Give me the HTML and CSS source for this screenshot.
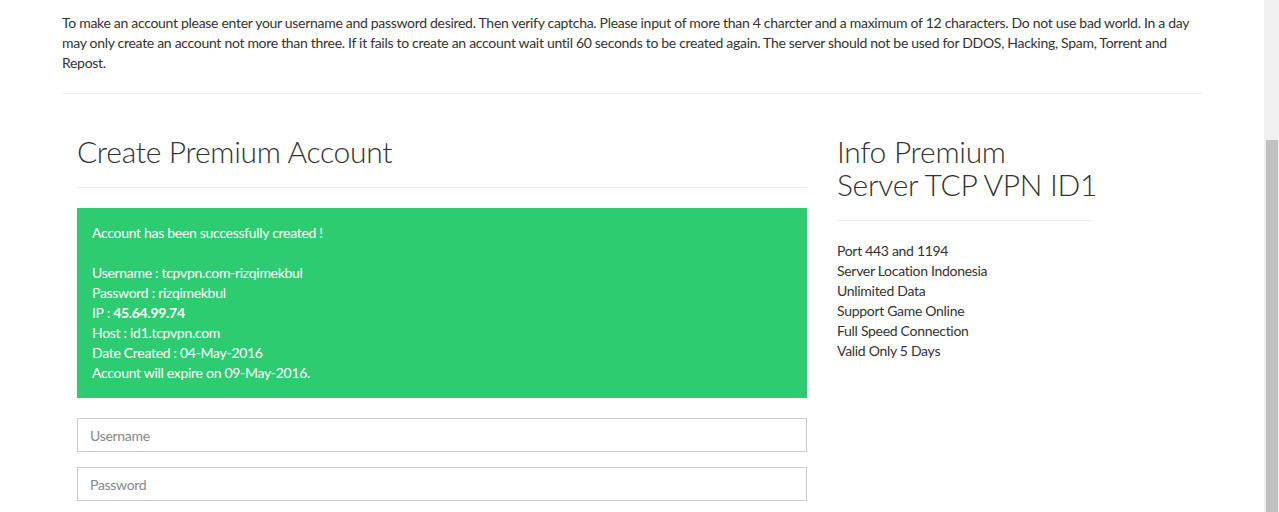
FILE: index.html
```html
<!DOCTYPE html>
<html lang="en">
<head>
    <meta charset="UTF-8">
    <meta name="viewport" content="width=device-width, initial-scale=1.0">
    <title>Create Premium Account</title>
    <link rel="stylesheet" href="styles.css">
</head>
<body>
    <div class="container">
        <p class="intro">To make an account please enter your username and password desired. Then verify captcha. Please input of more than 4 charcter and a maximum of 12 characters. Do not use bad world. In a day may only create an account not more than three. If it fails to create an account wait until 60 seconds to be created again. The server should not be used for DDOS, Hacking, Spam, Torrent and Repost.</p>
        <hr>

        <div class="content">
            <div class="main">
                <div class="page-header">
                    <h2>Create Premium Account</h2>
                </div>

                <div class="alert-success">
                    Account has been successfully created !<br><br>
                    Username : tcpvpn.com-rizqimekbul<br>
                    Password : rizqimekbul<br>
                    IP : <b>45.64.99.74</b><br>
                    Host : id1.tcpvpn.com<br>
                    Date Created : 04-May-2016<br>
                    Account will expire on 09-May-2016.
                </div>

                <form id="createForm">
                    <div class="form-group">
                        <input type="text" name="username" placeholder="Username">
                    </div>
                    <div class="form-group">
                        <input type="password" name="password" placeholder="Password">
                    </div>
                </form>
            </div>

            <div class="side">
                <div class="page-header">
                    <h2>Info Premium<br>Server TCP VPN ID1</h2>
                </div>
                <ul class="info-list">
                    <li>Port 443 and 1194</li>
                    <li>Server Location Indonesia</li>
                    <li>Unlimited Data</li>
                    <li>Support Game Online</li>
                    <li>Full Speed Connection</li>
                    <li>Valid Only 5 Days</li>
                </ul>
            </div>
        </div>
    </div>

    <!-- window scrollbar, scrolled to the bottom -->
    <div class="scrollbar"><div class="thumb"></div></div>
</body>
</html>
```

FILE: styles.css
```css
* {
    margin: 0;
    padding: 0;
    box-sizing: border-box;
}

html {
    overflow: hidden;
}

body {
    font-family: Lato, "Open Sans", sans-serif;
    font-size: 14px;
    line-height: 20px;
    letter-spacing: -0.3px;
    color: #333;
    background: #fff;
    padding-right: 15px;
}

.container {
    width: 1140px;
    margin: 0 auto;
}

.intro {
    margin-top: 13px;
}

hr {
    border: 0;
    border-top: 1px solid #eee;
    margin: 20px 0;
}

.content {
    display: flex;
    gap: 30px;
    padding: 0 15px;
}

.main {
    width: 730px;
}

.side {
    width: 255px;
}

.page-header {
    padding-bottom: 17px;
    border-bottom: 1px solid #eee;
}

.page-header h2 {
    margin-top: 21px;
    padding-bottom: 2px;
    font-size: 30px;
    line-height: 33px;
    font-weight: 300;
    white-space: nowrap;
    color: #333;
}

.alert-success {
    margin-top: 20px;
    padding: 15px;
    background: #2ecc71;
    color: #fff;
}

.alert-success b {
    font-weight: bold;
}

.form-group {
    margin-top: 20px;
}

.form-group + .form-group {
    margin-top: 15px;
}

input {
    display: block;
    width: 100%;
    height: 34px;
    padding: 6px 12px;
    border: 1px solid #ccc;
    border-radius: 0;
    font-family: inherit;
    font-size: 14px;
    letter-spacing: inherit;
    color: #555;
}

input::placeholder {
    color: #888;
}

.info-list {
    list-style: none;
    margin-top: 20px;
}

.scrollbar {
    position: fixed;
    top: 0;
    right: 0;
    width: 15px;
    height: 100%;
    background: #f0f0f0;
}

.thumb {
    position: absolute;
    top: 140px;
    bottom: 0;
    left: 2px;
    width: 12px;
    background: #c1c1c1;
}
```
